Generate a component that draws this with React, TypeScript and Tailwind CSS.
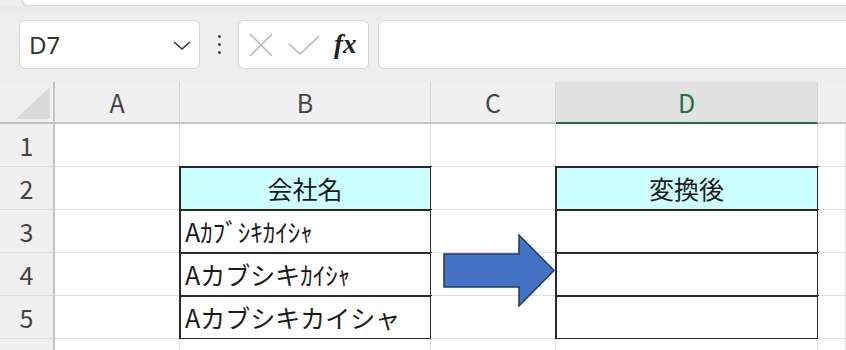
import React from "react";

const cellFont = { fontFamily: '"Noto Sans CJK JP", "Noto Sans", sans-serif' };

function HeaderCell({ label, selected, last }: { label: string; selected?: boolean; last?: boolean }) {
  return (
    <div
      className={
        "flex items-center justify-center border-b-2 text-[25px] leading-none " +
        (last ? "" : "border-r border-r-[#d6d6d6] ") +
        (selected
          ? "bg-[#e1e1e1] border-b-[#1e7145] text-[#1e7145]"
          : "bg-[#f0f0f0] border-b-[#c4c4c4] text-[#444]")
      }
    >
      {label}
    </div>
  );
}

function RowNum({ n }: { n?: number }) {
  return (
    <div className="flex items-center justify-center bg-[#f0f0f0] border-r-2 border-r-[#c4c4c4] border-b border-b-[#dedede] text-[25px] leading-none text-[#444]">
      {n}
    </div>
  );
}

function Cell({
  children,
  boxed,
  fill,
  center,
}: {
  children?: React.ReactNode;
  boxed?: boolean;
  fill?: boolean;
  center?: boolean;
}) {
  return (
    <div
      className={
        "flex items-center border-r border-b border-[#dedede] text-[25px] leading-none text-[#1a1a1a] whitespace-nowrap overflow-hidden " +
        (center ? "justify-center " : "pl-[5px] ") +
        (fill ? "bg-[#ccffff] " : "bg-white ") +
        (boxed ? "outline-2 outline-[#2a2a2a] -outline-offset-1 " : "")
      }
    >
      {children}
    </div>
  );
}

export default function App() {
  return (
    <div className="w-[846px] h-[350px] overflow-hidden bg-[#eeeeee] relative" style={cellFont}>
      {/* ribbon remnant */}
      <div className="h-[6px] ml-[22px] bg-white border-b border-l border-[#d4d4d4] rounded-bl-[7px] shadow-[0_1px_2px_rgba(0,0,0,0.08)]" />
      <div className="h-[14px] bg-gradient-to-b from-[#e9e9e9] to-[#efefef]" />

      {/* formula bar */}
      <div className="flex items-stretch h-[49px] pl-[19px]">
        <div className="w-[181px] bg-white border border-[#d6d6d6] rounded-[6px] flex items-center pl-[9px] pr-[7px]">
          <span className="text-[24px] text-[#333] leading-none" style={{ fontFamily: '"Noto Sans", sans-serif' }}>
            D7
          </span>
          <svg className="ml-auto" width="20" height="12" viewBox="0 0 20 12">
            <path d="M2 3 L10 10 L18 3" fill="none" stroke="#333" strokeWidth="1.6" />
          </svg>
        </div>
        <div className="w-[38px] flex flex-col items-center justify-center gap-[5px]">
          <span className="w-[3px] h-[3px] bg-[#444] rounded-full" />
          <span className="w-[3px] h-[3px] bg-[#444] rounded-full" />
          <span className="w-[3px] h-[3px] bg-[#444] rounded-full" />
        </div>
        <div className="w-[131px] bg-white border border-[#d6d6d6] rounded-[6px] flex items-center pl-[10px]">
          <svg width="24" height="24" viewBox="0 0 24 24">
            <path d="M1 1 L23 23 M23 1 L1 23" stroke="#b4b4b4" strokeWidth="1.5" fill="none" />
          </svg>
          <svg className="ml-[15px]" width="32" height="22" viewBox="0 0 32 22">
            <path d="M1 10 L12 20 L31 2" stroke="#b4b4b4" strokeWidth="1.5" fill="none" />
          </svg>
          <span
            className="ml-[14px] text-[27px] italic font-bold leading-none text-[#222]"
            style={{ fontFamily: '"Liberation Serif", serif' }}
          >
            fx
          </span>
        </div>
        <div className="flex-1 ml-[9px] -mr-[10px] bg-white border border-[#d6d6d6] rounded-[6px]" />
      </div>
      <div className="h-[13px]" />

      {/* grid */}
      <div className="relative grid grid-cols-[55px_125px_251px_125px_262px_1fr] grid-rows-[42px_repeat(6,43px)]">
        <div className="bg-[#f0f0f0] border-r-2 border-r-[#c4c4c4] border-b-2 border-b-[#c4c4c4] flex items-end justify-end pr-[3px] pb-[3px]">
          <svg width="34" height="32" viewBox="0 0 34 32">
            <path d="M0 32 L34 32 L34 0 Z" fill="#d9d9d9" />
          </svg>
        </div>
        <HeaderCell label="A" />
        <HeaderCell label="B" />
        <HeaderCell label="C" />
        <HeaderCell label="D" selected />
        <HeaderCell label="" last />

        <RowNum n={1} />
        <Cell />
        <Cell />
        <Cell />
        <Cell />
        <Cell />

        <RowNum n={2} />
        <Cell />
        <Cell boxed fill center>
          会社名
        </Cell>
        <Cell />
        <Cell boxed fill center>
          変換後
        </Cell>
        <Cell />

        <RowNum n={3} />
        <Cell />
        <Cell boxed>Aｶﾌﾞｼｷｶｲｼｬ</Cell>
        <Cell />
        <Cell boxed />
        <Cell />

        <RowNum n={4} />
        <Cell />
        <Cell boxed>Aカブシキｶｲｼｬ</Cell>
        <Cell />
        <Cell boxed />
        <Cell />

        <RowNum n={5} />
        <Cell />
        <Cell boxed>Aカブシキカイシャ</Cell>
        <Cell />
        <Cell boxed />
        <Cell />

        <RowNum />
        <Cell />
        <Cell />
        <Cell />
        <Cell />
        <Cell />

        {/* arrow shape overlay */}
        <svg className="absolute left-[440px] top-[147px]" width="120" height="82" viewBox="0 0 120 82">
          <path
            d="M4 25 L79 25 L79 6 L114 41.5 L79 77 L79 58 L4 58 Z"
            fill="#4472c4"
            stroke="#203864"
            strokeWidth="1.5"
            strokeLinejoin="miter"
          />
        </svg>
      </div>
    </div>
  );
}
